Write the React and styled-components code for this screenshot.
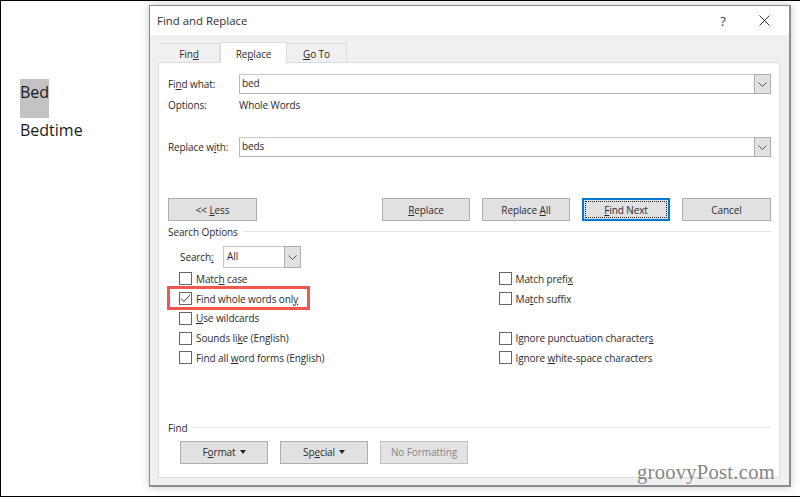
import React from "react";
import styled, { createGlobalStyle } from "styled-components";

const Global = createGlobalStyle`
  html, body { margin: 0; padding: 0; background: #fff; }
  *, *::before, *::after { box-sizing: border-box; }
  #root { width: 800px; height: 497px; overflow: hidden; }
`;

const Page = styled.div`
  width: 800px; height: 497px; display: flex; align-items: flex-start;
  background: #fff; border: solid #000; border-width: 1px 0 1px 1px;
  font-family: "Open Sans", "Noto Sans", sans-serif; color: #2b2b2b;
`;
const Doc = styled.div`
  width: 148px; flex: none; padding: 78px 0 0 19px;
  font-size: 16px; line-height: 39px; color: #1a1a1a;
`;
const Hit = styled.div`
  width: 29px; height: 39px; background: #c3c3c6; line-height: 26px;
`;
const Word = styled.div`
  height: 24px; line-height: 24px;
`;
const Dialog = styled.div`
  position: relative; width: 642px; height: 482px; margin-top: 4px; flex: none;
  background: #f0f0f0; border: 1px solid #8a8a8a; border-right: 2px solid #8c8c8c; border-bottom: 2px solid #8c8c8c;
  box-shadow: 0 0 8px rgba(0,0,0,.22);
  font-size: 10px; letter-spacing: -.1px; display: flex; flex-direction: column;
`;
const TitleBar = styled.div`
  height: 29px; flex: none; background: #fff; display: flex; align-items: center;
  padding-left: 7px; font-size: 11.4px; letter-spacing: 0; color: #303030;
`;
const TitleText = styled.span`flex: 1;`;
const Help = styled.span`
  width: 14px; margin-right: 29px; font-size: 13px; text-align: center; color: #333;
`;
const Close = styled.svg`
  width: 11px; height: 11px; margin-right: 19px; fill: none; stroke: #333; stroke-width: 1;
`;
const Tabs = styled.div`
  height: 28px; flex: none; display: flex; align-items: flex-end; padding-left: 9px;
  position: relative; z-index: 1; margin-bottom: -1px;
`;
const Tab = styled.div`
  width: ${p => p.$w}px; height: ${p => (p.$active ? 21 : 20)}px;
  background: ${p => (p.$active ? "#fff" : "#f0f0f0")};
  border: 1px solid #dcdcdc; border-bottom: ${p => (p.$active ? "none" : "1px solid #dcdcdc")};
  border-left: ${p => (p.$active ? "1px solid #dcdcdc" : "none")};
  display: flex; align-items: center; justify-content: center; padding-top: 1px;
`;
const Panel = styled.div`
  height: 416px; margin: 0 9px 0 8px; background: #fff; border: 1px solid #dcdcdc;
  padding: 11px 8px 0 9px; display: flex; flex-direction: column;
`;
const FieldRow = styled.div`
  display: flex; align-items: center; height: 20px; margin-top: ${p => p.$top || 0}px;
`;
const Label = styled.div`width: 71px; flex: none;`;
const Field = styled.div`
  flex: 1; height: 20px; display: flex; background: #fff;
  border: 1px solid #b9b9b9; border-top-color: #c9c9c9;
`;
const FieldText = styled.div`flex: 1; padding-left: 2px; line-height: 16px;`;
const Drop = styled.div`
  width: 17px; flex: none; margin: -1px -1px -1px 0; background: #e1e1e1; border: 1px solid #adadad;
  display: flex; align-items: center; justify-content: center;
`;
const Chevron = styled.svg`width: 9px; height: 5px; fill: none; stroke: #555; stroke-width: 1;`;
const InfoRow = styled.div`
  display: flex; align-items: center; height: 16px; margin-top: 3px;
`;
const ButtonRow = styled.div`
  display: flex; height: 23px; margin-top: ${p => p.$top}px; padding-left: ${p => p.$left || 0}px; gap: 12px;
`;
const Btn = styled.div`
  width: ${p => p.$w || 88}px; height: 23px; flex: none; position: relative;
  margin-left: ${p => p.$push || 0}px;
  background: ${p => (p.$off ? "#e3e3e3" : "#e1e1e1")};
  color: ${p => (p.$off ? "#868686" : "#2b2b2b")};
  border: ${p => (p.$focus ? "2px solid #0078d7" : p.$off ? "1px solid #bfbfbf" : "1px solid #adadad")};
  display: flex; align-items: center; justify-content: center; gap: 4px;
  ${p => p.$focus && `
    &::after { content: ""; position: absolute; inset: 1px; border: 1px dotted #222; }
  `}
`;
const Caret = styled.span`
  width: 0; height: 0; border: 3px solid transparent; border-top: 4px solid #222; border-bottom: 0;
`;
const Legend = styled.div`
  display: flex; align-items: center; gap: 5px; height: 14px; margin-top: ${p => p.$top}px;
  &::after { content: ""; flex: 1; height: 1px; background: #e2e2e2; margin-top: -1px; }
`;
const SearchRow = styled.div`
  display: flex; align-items: center; height: 22px; margin-top: 7px; padding-left: 12px;
`;
const SearchLabel = styled.div`width: 43px; flex: none;`;
const Select = styled.div`
  width: 78px; height: 22px; display: flex; border: 1px solid #c4c4c4; background: #fff;
`;
const SelectText = styled.div`flex: 1; padding-left: 3px; line-height: 19px;`;
const Options = styled.div`
  display: grid; grid-template-columns: 319.5px 1fr; margin-top: 1px; padding-left: 11px;
`;
const CheckRow = styled.div`
  position: relative; display: flex; align-items: center; gap: 4px; height: 19.75px;
  ${p => p.$marked && `
    &::after { content: ""; position: absolute; left: -12px; top: -3px; width: 143px; height: 24px; border: 3px solid #f2574d; }
  `}
`;
const Box = styled.div`
  width: 13px; height: 13px; flex: none; border: 1px solid #666; background: #fff;
  display: flex; align-items: center; justify-content: center;
`;
const Tick = styled.svg`width: 11px; height: 9px; fill: none; stroke: #333; stroke-width: 1;`;
const Spacer = styled.div`height: 19.75px;`;
const Mark = styled.div`
  position: absolute; right: 14px; bottom: 2px; font-family: "Liberation Serif", serif;
  font-size: 20.5px; line-height: 22px; color: #858585; letter-spacing: .3px;
`;
const U = styled.span`text-decoration: underline; text-underline-offset: 1px; text-decoration-thickness: 1px;`;

const Chev = () => <Chevron viewBox="0 0 9 5"><path d="M.5.5 4.5 4.5 8.5.5" /></Chevron>;
const Check = ({ children, on, marked }) => (
  <CheckRow $marked={marked}>
    <Box>{on && <Tick viewBox="0 0 11 9"><path d="M1 4.5 4 7.5 10 1" /></Tick>}</Box>
    <span>{children}</span>
  </CheckRow>
);

export default function App() {
  return (
    <Page>
      <Global />
      <Doc>
        <Hit>Bed</Hit>
        <Word>Bedtime</Word>
      </Doc>
      <Dialog>
        <TitleBar>
          <TitleText>Find and Replace</TitleText>
          <Help>?</Help>
          <Close viewBox="0 0 11 11"><path d="M.5.5 10.5 10.5M10.5.5.5 10.5" /></Close>
        </TitleBar>
        <Tabs>
          <Tab $w={61}><span>Fin<U>d</U></span></Tab>
          <Tab $w={67} $active><span>Re<U>p</U>lace</span></Tab>
          <Tab $w={60}><span><U>G</U>o To</span></Tab>
        </Tabs>
        <Panel>
          <FieldRow>
            <Label>Fi<U>n</U>d what:</Label>
            <Field><FieldText>bed</FieldText><Drop><Chev /></Drop></Field>
          </FieldRow>
          <InfoRow><Label>Options:</Label><span>Whole Words</span></InfoRow>
          <FieldRow $top={24}>
            <Label>Replace w<U>i</U>th:</Label>
            <Field><FieldText>beds</FieldText><Drop><Chev /></Drop></Field>
          </FieldRow>
          <ButtonRow $top={41}>
            <Btn $w={89}><span>&lt;&lt; <U>L</U>ess</span></Btn>
            <Btn $push={113}><span><U>R</U>eplace</span></Btn>
            <Btn><span>Replace <U>A</U>ll</span></Btn>
            <Btn $focus><span><U>F</U>ind Next</span></Btn>
            <Btn $w={89}><span>Cancel</span></Btn>
          </ButtonRow>
          <Legend $top={4}>Search Options</Legend>
          <SearchRow>
            <SearchLabel>Search<U>:</U></SearchLabel>
            <Select><SelectText>All</SelectText><Drop><Chev /></Drop></Select>
          </SearchRow>
          <Options>
            <Check>Matc<U>h</U> case</Check>
            <Check>Match prefi<U>x</U></Check>
            <Check on marked>Find whole words onl<U>y</U></Check>
            <Check>Ma<U>t</U>ch suffix</Check>
            <Check><U>U</U>se wildcards</Check>
            <Spacer />
            <Check>Sounds li<U>k</U>e (English)</Check>
            <Check>Ignore punctuation character<U>s</U></Check>
            <Check>Find all <U>w</U>ord forms (English)</Check>
            <Check>Ignore <U>w</U>hite-space characters</Check>
          </Options>
          <Legend $top={53}>Find</Legend>
          <ButtonRow $top={6} $left={12}>
            <Btn><span>F<U>o</U>rmat</span><Caret /></Btn>
            <Btn><span>Sp<U>e</U>cial</span><Caret /></Btn>
            <Btn $off><span>No Formatting</span></Btn>
          </ButtonRow>
        </Panel>
        <Mark>groovyPost.com</Mark>
      </Dialog>
    </Page>
  );
}
